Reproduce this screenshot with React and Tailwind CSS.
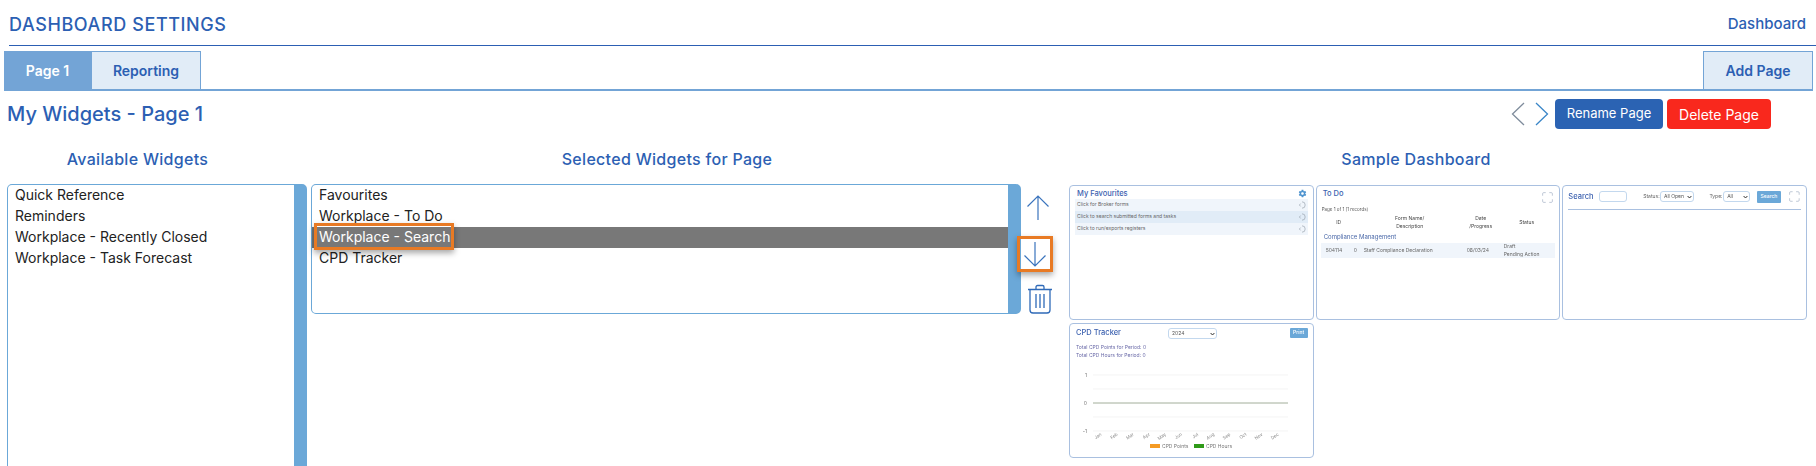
import { Maximize } from 'lucide-react';
import { IoMdSettings } from 'react-icons/io';

const available = ['Quick Reference', 'Reminders', 'Workplace - Recently Closed', 'Workplace - Task Forecast'];
const selected = ['Favourites', 'Workplace - To Do', 'Workplace - Search', 'CPD Tracker'];
const favourites = ['Click for Broker forms', 'Click to search submitted forms and tasks', 'Click to run/exports registers'];
const months = ['Jan', 'Feb', 'Mar', 'Apr', 'May', 'Jun', 'Jul', 'Aug', 'Sep', 'Oct', 'Nov', 'Dec'];

function Arrow({ down }) {
  return (
    <svg width="24" height="26" viewBox="0 0 24 26" fill="none" stroke="#3b74bd" strokeWidth="1.2">
      {down ? <path d="M12 1v24M1.5 14.5 12 25 22.5 14.5" /> : <path d="M12 25V1M1.5 11.5 12 1l10.5 10.5" />}
    </svg>
  );
}

function Trash() {
  return (
    <svg width="26" height="30" viewBox="0 0 26 30" fill="none" stroke="#2f6ab8" strokeWidth="1.3">
      <path d="M1 5.5h24M9 5.5V3a1.5 1.5 0 0 1 1.5-1.5h5A1.5 1.5 0 0 1 17 3v2.5" />
      <path d="M3 5.5V26a3 3 0 0 0 3 3h14a3 3 0 0 0 3-3V5.5" />
      <path d="M9 10v14M13 10v14M17 10v14" />
    </svg>
  );
}

function GoIcon() {
  return (
    <svg width="8" height="8" viewBox="0 0 8 8" fill="none" stroke="#8d97a3" strokeWidth="0.6">
      <path d="M3 .8a3 3 0 1 1 0 6.4M1.6 2.6.4 4l1.2 1.4" />
    </svg>
  );
}

// thumbnail dropdowns are too small for a native select to fit its text
function MiniSelect({ value, className }) {
  return (
    <div className={`flex h-[11px] items-center justify-between rounded-[3px] border border-[#c3d8ee] bg-white pl-[3px] pr-[1px] text-[5px] leading-none text-[#555] ${className}`}>
      <span>{value}</span>
      <svg width="5" height="4" viewBox="0 0 5 4" fill="none" stroke="#333" strokeWidth="1">
        <path d="M.6 1 2.5 3 4.4 1" />
      </svg>
    </div>
  );
}

function FavouritesCard() {
  return (
    <div className="h-[135px] rounded-[4px] border border-[#a9c0e0] bg-white px-[5px]">
      <div className="flex h-[13px] items-center justify-between pl-[2px] pr-[1px] pt-[2px]">
        <span className="text-[7.5px] font-medium text-[#3d62b0]">My Favourites</span>
        <IoMdSettings className="h-[9px] w-[9px] text-[#4f94cf]" />
      </div>
      <div className="text-[5px] text-[#666]">
        {favourites.map((f, i) => (
          <div key={f} className={`flex h-[12px] items-center justify-between pl-[2px] pr-[1px] ${i === 1 ? 'bg-[#e1ecf7]' : 'bg-[#f0f5fb]'}`}>
            <span>{f}</span>
            <GoIcon />
          </div>
        ))}
      </div>
    </div>
  );
}

function TodoCard() {
  return (
    <div className="h-[135px] rounded-[4px] border border-[#a9c0e0] bg-white px-[4px]">
      <div className="flex h-[21px] items-start justify-between pl-[2px] pr-[1px] pt-[2px]">
        <span className="text-[7.5px] font-medium text-[#3d62b0]">To Do</span>
        <Maximize className="mt-[3px] h-[13px] w-[13px] text-[#8a9bb4]" strokeWidth={1} />
      </div>
      <div className="pl-[1px] text-[4.5px] text-[#555]">Page 1 of 1 [1 records]</div>
      <div className="grid h-[17px] grid-cols-[36px_106px_36px_56px] items-center text-center text-[5px] leading-[8px] text-[#444]">
        <span>ID</span>
        <span>Form Name/<br />Description</span>
        <span>Date<br />/Progress</span>
        <span>Status</span>
      </div>
      <div className="flex h-[11px] items-center pl-[3px] text-[6px] text-[#4a68a8]">Compliance Management</div>
      <div className="mt-[1px] flex h-[15px] items-center bg-[#f0f5fb] pl-[5px] text-[5px] leading-[8px] text-[#666]">
        <span className="w-[28px]">504114</span>
        <span className="w-[10px]">0</span>
        <span className="w-[103px]">Staff Compliance Declaration</span>
        <span className="w-[37px]">08/03/24</span>
        <span>Draft<br />Pending Action</span>
      </div>
    </div>
  );
}

function SearchCard() {
  return (
    <div className="h-[135px] rounded-[4px] border border-[#a9c0e0] bg-white px-[5px]">
      <div className="flex h-[24px] items-center border-b border-[#a9c0e0] pb-[2px] text-[5px] text-[#666]">
        <span className="w-[31px] text-[7.5px] font-medium text-[#3d62b0]">Search</span>
        <div className="h-[11px] w-[29px] rounded-[3px] border border-[#c3d8ee]" />
        <span className="ml-[16px] w-[17px]">Status:</span>
        <MiniSelect value="All Open" className="w-[35px]" />
        <span className="ml-[15px] w-[14px]">Type:</span>
        <MiniSelect value="All" className="w-[27px]" />
        <span className="ml-[7px] flex h-[12px] w-[25px] items-center justify-center rounded-[1px] bg-[#6ba8d8] font-medium text-white">Search</span>
        <Maximize className="ml-[7px] h-[13px] w-[13px] text-[#8a9bb4]" strokeWidth={1} />
      </div>
    </div>
  );
}

function CpdCard() {
  return (
    <div className="h-[135px] rounded-[4px] border border-[#a9c0e0] bg-white px-[5px]">
      <div className="flex h-[17px] items-start pt-[4px]">
        <span className="w-[93px] pl-[1px] text-[7.5px] font-medium leading-[10px] text-[#3d62b0]">CPD Tracker</span>
        <MiniSelect value="2024" className="w-[49px]" />
        <span className="ml-auto flex h-[10px] w-[18px] items-center justify-center rounded-[1px] bg-[#6ba8d8] text-[5px] font-medium text-white">Print</span>
      </div>
      <div className="mt-[2px] pl-[1px] text-[5px] leading-[8px] text-[#6a6aa8]">
        <div>Total CPD Points for Period: 0</div>
        <div>Total CPD Hours for Period: 0</div>
      </div>
      <svg width="234" height="88" viewBox="0 0 234 88" className="mt-[8px] block" fontFamily="Inter, sans-serif">
        {[0, 14, 28, 42, 56].map((d) => (
          <line key={d} x1="18" x2="213" y1={d + 8} y2={d + 8} stroke={d === 28 ? '#8a9a80' : '#efefef'} strokeWidth={d === 28 ? 0.8 : 0.7} />
        ))}
        <text x="12" y="10" fontSize="5" fill="#777" textAnchor="end">1</text>
        <text x="12" y="38" fontSize="5" fill="#777" textAnchor="end">0</text>
        <text x="12" y="66" fontSize="5" fill="#777" textAnchor="end">-1</text>
        {months.map((m, i) => (
          <text key={m} x={0} y={0} fontSize="4.5" fill="#888" textAnchor="end" transform={`translate(${27 + i * 16.1} 68) rotate(-35)`}>{m}</text>
        ))}
        <rect x="75" y="77" width="10" height="4" fill="#f59b24" />
        <text x="87" y="81" fontSize="5" fill="#777">CPD Points</text>
        <rect x="119" y="77" width="10" height="4" fill="#2f9a18" />
        <text x="131" y="81" fontSize="5" fill="#777">CPD Hours</text>
      </svg>
    </div>
  );
}

export default function App() {
  return (
    <div className="h-[466px] w-[1816px] overflow-hidden bg-white font-[Inter,sans-serif] text-[#2c5fb3]">
      <div className="ml-[9px] flex h-[46px] items-center justify-between border-b border-[#2c5fb3] pr-[10px]">
        <h1 className="pt-[3px] text-[18px] font-medium tracking-[0.6px]">DASHBOARD SETTINGS</h1>
        <a className="pt-[3px] text-[15px] font-medium">Dashboard</a>
      </div>

      <div className="ml-[4px] mr-[3px] mt-[5px] flex h-[40px] items-stretch border-b-2 border-[#73a4d6] text-[14px] font-semibold">
        <button className="w-[87px] bg-[#73a4d6] text-white">Page 1</button>
        <button className="w-[110px] border-x border-t border-[#73a4d6] bg-[#e1ecf7]">Reporting</button>
        <button className="ml-auto w-[110px] border-x border-t border-[#73a4d6] bg-[#e1ecf7]">Add Page</button>
      </div>

      <div className="ml-[7px] mr-[45px] mt-[8px] flex h-[30px] items-center justify-between">
        <h2 className="text-[20px] font-medium">My Widgets - Page 1</h2>
        <div className="flex items-center">
          <svg width="38" height="24" viewBox="0 0 38 24" fill="none" strokeWidth="1.3" className="mr-[6px]">
            <path d="M13 1 1.5 12 13 23" stroke="#7f8c9c" />
            <path d="M25 1 36.5 12 25 23" stroke="#3a86c8" />
          </svg>
          <button className="h-[30px] w-[108px] rounded-[4px] bg-[#2b63b3] text-[13px] text-white">Rename Page</button>
          <button className="ml-[4px] h-[30px] w-[104px] rounded-[4px] bg-[#f9281d] text-[14px] text-white">Delete Page</button>
        </div>
      </div>

      <div className="mt-[14px] flex h-[32px] items-center text-[16px] font-medium tracking-[0.3px]">
        <div className="w-[275px] text-center">Available Widgets</div>
        <div className="ml-[48px] w-[688px] text-center">Selected Widgets for Page</div>
        <div className="ml-[30px] w-[750px] text-center">Sample Dashboard</div>
      </div>

      <div className="flex pl-[7px] pt-[9px] text-[14px] text-[#222]">
        <div className="h-[300px] w-[300px] shrink-0 rounded-[5px] border border-[#6ba8d8] border-r-[13px]">
          {available.map((w) => (
            <div key={w} className="flex h-[21px] items-center pb-[2px] pl-[7px]">{w}</div>
          ))}
        </div>

        <div className="ml-[4px] h-[130px] w-[710px] shrink-0 rounded-[5px] border border-[#6ba8d8] border-r-[13px]">
          {selected.map((w, i) => (
            <div key={w} className={`flex h-[21px] items-center pb-[2px] pl-[7px] ${i === 2 ? 'bg-[#787878] text-white' : ''}`}>
              {i === 2 ? (
                <span className="relative">
                  {w}
                  <span className="absolute -bottom-[3px] -left-[5px] -right-[4px] -top-[3px] border-[3px] border-[#e87a24] shadow-[0_3px_6px_rgba(0,0,0,0.35)]" />
                </span>
              ) : w}
            </div>
          ))}
        </div>

        <div className="relative w-[48px] shrink-0">
          <div className="absolute left-[5px] top-[11px]"><Arrow /></div>
          <div className="absolute -left-[4px] top-[52px] flex h-[36px] w-[36px] items-center justify-center border-[3px] border-[#e87a24] shadow-[0_3px_6px_rgba(0,0,0,0.35)]"><Arrow down /></div>
          <div className="absolute left-[6px] top-[100px]"><Trash /></div>
        </div>

        <div className="mt-[1px] grid h-[273px] w-[738px] shrink-0 grid-cols-3 gap-x-[2px] gap-y-[3px] blur-[0.3px]">
          <FavouritesCard />
          <TodoCard />
          <SearchCard />
          <CpdCard />
        </div>
      </div>
    </div>
  );
}
